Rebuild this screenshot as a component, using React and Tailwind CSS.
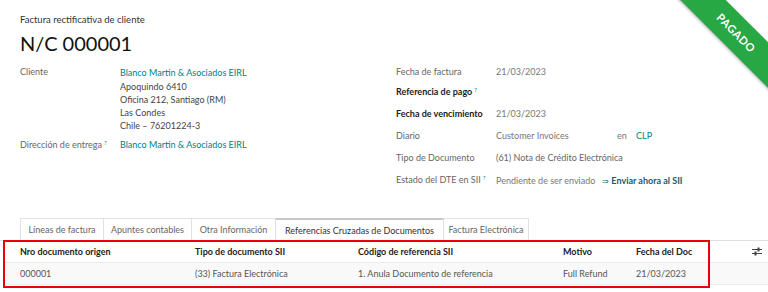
import React from 'react';

const font = "font-['Lato','Liberation_Sans',sans-serif]";

function Field({ label, bold, help, children, className = '' }) {
  return (
    <div className={`flex leading-[14px] ${className}`}>
      <div className={`w-[100px] shrink-0 ${bold ? 'font-bold text-[#222]' : 'text-[#666]'}`}>
        {label}
        {help && <sup className="text-[#017e84] text-[6px] ml-[2px] font-normal">?</sup>}
      </div>
      <div className="flex-1">{children}</div>
    </div>
  );
}

function SliderIcon() {
  return (
    <svg width="10" height="9" viewBox="0 0 10 9" className="text-[#444]">
      <line x1="0" y1="2.5" x2="10" y2="2.5" stroke="currentColor" strokeWidth="1" />
      <line x1="0" y1="6.5" x2="10" y2="6.5" stroke="currentColor" strokeWidth="1" />
      <rect x="5.5" y="0.5" width="2" height="4" fill="currentColor" />
      <rect x="2.5" y="4.5" width="2" height="4" fill="currentColor" />
    </svg>
  );
}

export default function App() {
  const tabs = [
    { label: 'Líneas de factura', w: 'w-[84px]' },
    { label: 'Apuntes contables', w: 'w-[89px]' },
    { label: 'Otra Información', w: 'w-[85px]' },
    { label: 'Referencias Cruzadas de Documentos', w: 'w-[169px]', active: true },
    { label: 'Factura Electrónica', w: 'w-[86px]' },
  ];

  return (
    <div className={`relative w-[768px] h-[292px] overflow-hidden bg-white text-[9px] text-[#444] ${font}`}>
      {/* ribbon */}
      <div className="absolute left-[636px] top-[17px] w-[200px] h-[32px] rotate-45 bg-[#28a745] shadow-[0_1px_3px_rgba(0,0,0,0.35)] flex items-center justify-center text-white font-bold text-[11px] tracking-[0.5px]">
        PAGADO
      </div>

      {/* header */}
      <div className="h-[65px] pl-5 pt-[14px]">
        <div className="h-[12px] leading-[12px] text-[#333] text-[9.5px]">Factura rectificativa de cliente</div>
        <div className="mt-[5px] text-[20px] leading-[24px] text-[#111]">N/C 000001</div>
      </div>

      {/* fields */}
      <div className="h-[154px] pl-5 flex">
        <div className="w-[376px]">
          <Field label="Cliente">
            <div className="text-[#017e84] leading-[15px] -mt-[0.5px]">Blanco Martin &amp; Asociados EIRL</div>
            <div className="leading-[13px]">Apoquindo 6410</div>
            <div className="leading-[13px]">Oficina 212, Santiago (RM)</div>
            <div className="leading-[13px]">Las Condes</div>
            <div className="leading-[13px]">Chile – 76201224-3</div>
          </Field>
          <Field label="Dirección de entrega" help className="mt-[6px]">
            <span className="text-[#017e84]">Blanco Martin &amp; Asociados EIRL</span>
          </Field>
        </div>
        <div className="flex-1">
          <Field label="Fecha de factura">
            <span className="text-[#777]">21/03/2023</span>
          </Field>
          <Field label="Referencia de pago" bold help className="mt-[6px]" />
          <Field label="Fecha de vencimiento" bold className="mt-[8px]">
            <span className="text-[#777]">21/03/2023</span>
          </Field>
          <Field label="Diario" className="mt-[8px]">
            <div className="flex text-[#777]">
              <span className="w-[121px]">Customer Invoices</span>
              <span className="w-[19px]">en</span>
              <span className="text-[#017e84]">CLP</span>
            </div>
          </Field>
          <Field label="Tipo de Documento" className="mt-[8px]">
            <span className="text-[#666]">(61) Nota de Crédito Electrónica</span>
          </Field>
          <Field label="Estado del DTE en SII" help className="mt-[8px]">
            <div className="flex items-center gap-[7px] mt-[1px]">
              <span className="text-[#777]">Pendiente de ser enviado</span>
              <span className="text-[#1b5a6e] font-bold">
                <span className="font-normal text-[8px] mr-[2px]">⇒</span>Enviar ahora al SII
              </span>
            </div>
          </Field>
        </div>
      </div>

      {/* tabs */}
      <div className="h-[22px] pl-5 flex items-end border-b border-[#dee2e6]">
        {tabs.map((t) => (
          <div
            key={t.label}
            className={`${t.w} -mr-px flex items-center justify-center border-l border-r border-t border-[#dee2e6] bg-white ${
              t.active ? 'h-[23px] -mb-px text-[#333] border-t-2 border-t-[#c8c8c8]' : 'h-[22px] text-[#666]'
            }`}
          >
            {t.label}
          </div>
        ))}
      </div>

      {/* table */}
      <div className="ml-[3px]">
        <div className="h-[22px] flex items-center border-b border-[#e9ecef] font-bold text-[#222]">
          <div className="w-[192px] pl-[17px]">Nro documento origen</div>
          <div className="w-[163px]">Tipo de documento SII</div>
          <div className="w-[205px]">Código de referencia SII</div>
          <div className="w-[73px]">Motivo</div>
          <div className="w-[116px]">Fecha del Doc</div>
          <div className="flex items-center"><SliderIcon /></div>
        </div>
        <div className="h-[22px] flex items-center border-b border-[#e9ecef] bg-[#f9f9f9] text-[#555]">
          <div className="w-[192px] pl-[17px]">000001</div>
          <div className="w-[163px]">(33) Factura Electrónica</div>
          <div className="w-[205px]">1. Anula Documento de referencia</div>
          <div className="w-[73px]">Full Refund</div>
          <div className="w-[116px]">21/03/2023</div>
        </div>
      </div>

      {/* highlight */}
      <div className="absolute left-[3px] top-[240px] w-[707px] h-[48px] border-2 border-[#e8000b] pointer-events-none" />
    </div>
  );
}
